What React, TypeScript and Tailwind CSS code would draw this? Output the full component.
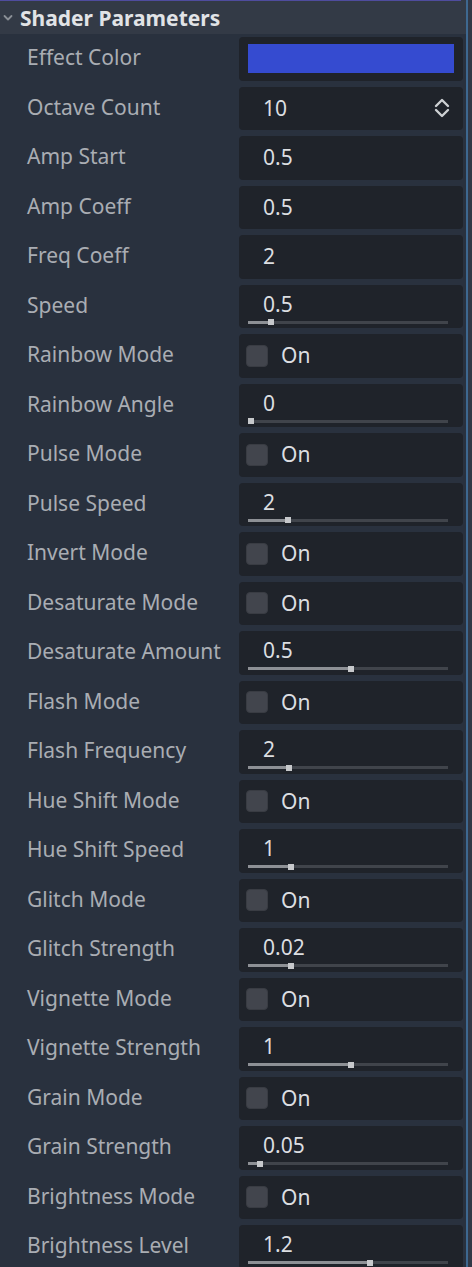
type Row =
  | { kind: "color"; label: string }
  | { kind: "spin"; label: string; value: string }
  | { kind: "text"; label: string; value: string }
  | { kind: "slider"; label: string; value: string; pos: number }
  | { kind: "check"; label: string };

const rows: Row[] = [
  { kind: "color", label: "Effect Color" },
  { kind: "spin", label: "Octave Count", value: "10" },
  { kind: "text", label: "Amp Start", value: "0.5" },
  { kind: "text", label: "Amp Coeff", value: "0.5" },
  { kind: "text", label: "Freq Coeff", value: "2" },
  { kind: "slider", label: "Speed", value: "0.5", pos: 20 },
  { kind: "check", label: "Rainbow Mode" },
  { kind: "slider", label: "Rainbow Angle", value: "0", pos: 0 },
  { kind: "check", label: "Pulse Mode" },
  { kind: "slider", label: "Pulse Speed", value: "2", pos: 37 },
  { kind: "check", label: "Invert Mode" },
  { kind: "check", label: "Desaturate Mode" },
  { kind: "slider", label: "Desaturate Amount", value: "0.5", pos: 100 },
  { kind: "check", label: "Flash Mode" },
  { kind: "slider", label: "Flash Frequency", value: "2", pos: 38 },
  { kind: "check", label: "Hue Shift Mode" },
  { kind: "slider", label: "Hue Shift Speed", value: "1", pos: 40 },
  { kind: "check", label: "Glitch Mode" },
  { kind: "slider", label: "Glitch Strength", value: "0.02", pos: 40 },
  { kind: "check", label: "Vignette Mode" },
  { kind: "slider", label: "Vignette Strength", value: "1", pos: 100 },
  { kind: "check", label: "Grain Mode" },
  { kind: "slider", label: "Grain Strength", value: "0.05", pos: 9 },
  { kind: "check", label: "Brightness Mode" },
  { kind: "slider", label: "Brightness Level", value: "1.2", pos: 119 },
];

const Spinner = () => (
  <svg width="18" height="22" viewBox="0 0 18 22" fill="none">
    <path d="M3 9 L9 3 L15 9" stroke="#cdd0d3" strokeWidth="2.4" strokeLinecap="round" strokeLinejoin="round" />
    <path d="M3 13 L9 19 L15 13" stroke="#cdd0d3" strokeWidth="2.4" strokeLinecap="round" strokeLinejoin="round" />
  </svg>
);

const Editor = ({ row }: { row: Row }) => {
  switch (row.kind) {
    case "color":
      return (
        <div className="flex h-full rounded-[4px] bg-[#1f232a] pt-[7px] pr-[9px] pb-[8px] pl-[9px]">
          <div className="h-full w-full bg-[#354bd0]" />
        </div>
      );
    case "spin":
      return (
        <div className="flex h-full items-center justify-between rounded-[4px] bg-[#1f232a] pr-[12px] pl-[24px]">
          <span className="text-[21px] text-[#dcdee1]">{row.value}</span>
          <Spinner />
        </div>
      );
    case "text":
      return (
        <div className="flex h-full items-center rounded-[4px] bg-[#1f232a] pl-[24px]">
          <span className="text-[21px] text-[#dcdee1]">{row.value}</span>
        </div>
      );
    case "slider":
      return (
        <div className="flex h-full flex-col rounded-[4px] bg-[#1f232a] px-[9px] pt-[6px]">
          <span className="pl-[15px] text-[21px] leading-[27px] text-[#dcdee1]">{row.value}</span>
          <div className="relative mt-[3px] h-[3px] w-[200px] bg-[#40444b]">
            <div className="absolute top-0 left-0 h-[3px] bg-[#8d9095]" style={{ width: row.pos }} />
            <div
              className="absolute top-[-1.5px] h-[6px] w-[6px] bg-[#c6c8cb]"
              style={{ left: Math.min(row.pos, 194) }}
            />
          </div>
        </div>
      );
    case "check":
      return (
        <div className="flex h-full items-center gap-[13px] rounded-[4px] bg-[#1f232a] pl-[7px]">
          <div className="h-[22px] w-[22px] rounded-[4px] border border-[#393c43] bg-[#42454d]" />
          <span className="text-[21px] text-[#dcdee1]">On</span>
        </div>
      );
  }
};

export default function App() {
  return (
    <div
      className="flex h-[1267px] w-[472px] overflow-hidden bg-[#29313e]"
      style={{ fontFamily: '"Noto Sans", "Open Sans", sans-serif' }}
    >
      <div className="flex w-[466px] flex-col">
        <div className="flex h-[34px] shrink-0 flex-col bg-[#333a46]">
          <div className="h-[1px] w-[461px] bg-[#4f4c9e]" />
          <div className="flex flex-1 items-center gap-[7px] pl-[3px]">
            <svg width="10" height="8" viewBox="0 0 10 8" fill="none">
              <path d="M1.5 2 L5 5.5 L8.5 2" stroke="#8a8f96" strokeWidth="1.8" strokeLinecap="round" strokeLinejoin="round" />
            </svg>
            <span className="text-[21px] leading-[28px] font-bold text-[#e1e3e6]">Shader Parameters</span>
          </div>
        </div>
        {rows.map((row) => (
          <div key={row.label} className="flex h-[49.5px] shrink-0 py-[3px]">
            <div className="flex w-[239px] items-center pb-[2px] pl-[27px] text-[21px] text-[#a9adb3]">
              {row.label}
            </div>
            <div className="w-[224px]">
              <Editor row={row} />
            </div>
          </div>
        ))}
      </div>
      <div className="w-[2px] bg-[#3e6890]" />
      <div className="flex-1 bg-[#313846]" />
    </div>
  );
}
